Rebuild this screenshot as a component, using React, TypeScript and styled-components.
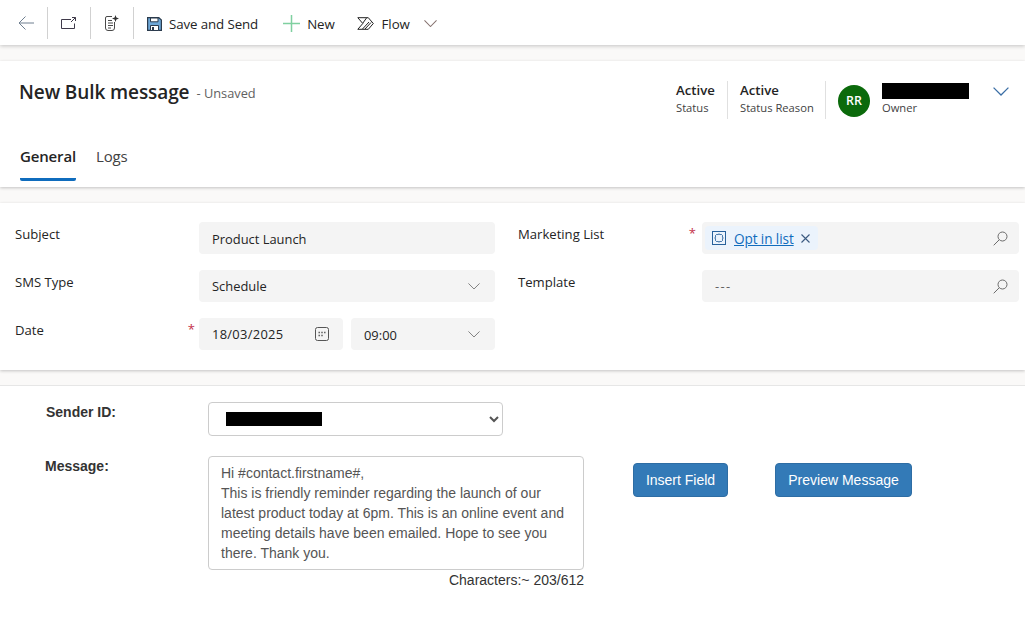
import React from "react";
import styled, { createGlobalStyle } from "styled-components";

const Global = createGlobalStyle`
  html, body { margin: 0; padding: 0; background: #faf9f8; }
  body { font-family: "Open Sans", "Noto Sans", sans-serif; color: #242424; overflow: hidden; }
  * { box-sizing: border-box; }
`;

const Page = styled.div`
  width: 1025px;
  height: 622px;
  display: flex;
  flex-direction: column;
  overflow: hidden;
`;

const Toolbar = styled.div`
  height: 45px;
  background: #fff;
  box-shadow: 0 1px 4px rgba(0, 0, 0, 0.22);
  display: flex;
  align-items: center;
  padding-left: 4px;
  flex: none;
  position: relative;
`;
const IconCell = styled.div`
  width: 43px;
  height: 32px;
  display: flex;
  align-items: center;
  justify-content: center;
  border-right: 1px solid #d1d1d1;
  &:first-child { width: 44px; }
`;
const ToolButton = styled.div<{ $gap?: number; $ml?: number }>`
  display: flex;
  align-items: center;
  gap: ${(p) => p.$gap ?? 8}px;
  margin-left: ${(p) => p.$ml ?? 0}px;
  font-size: 13.3px;
  letter-spacing: -0.1px;
  color: #242424;
  padding-top: 2px;
`;
const ToolLabel = styled.span`
  padding-top: 1px;
`;

const Card = styled.section<{ $h: number; $mt: number }>`
  height: ${(p) => p.$h}px;
  margin-top: ${(p) => p.$mt}px;
  background: #fff;
  box-shadow: 0 1px 3px rgba(0, 0, 0, 0.22);
  flex: none;
`;

const HeaderTop = styled.div`
  display: flex;
  justify-content: space-between;
  height: 65px;
  padding: 19px 16px 0 19px;
`;
const TitleRow = styled.div`
  display: flex;
  align-items: center;
  gap: 7px;
  height: 24px;
`;
const Title = styled.h1`
  margin: 0;
  font-size: 19px;
  line-height: 24px;
  font-weight: 600;
  letter-spacing: -0.1px;
  color: #242424;
`;
const Unsaved = styled.span`
  font-size: 12.8px;
  line-height: 24px;
  color: #616161;
  padding-top: 1px;
`;
const Meta = styled.div`
  display: flex;
  align-items: flex-start;
  margin-top: 1px;
`;
const MetaBlock = styled.div<{ $w: number }>`
  width: ${(p) => p.$w}px;
  height: 38px;
  border-right: 1px solid #e0e0e0;
  margin-right: 12px;
`;
const MetaValue = styled.div`
  font-size: 13.2px;
  line-height: 18px;
  font-weight: 600;
  color: #242424;
`;
const MetaLabel = styled.div`
  font-size: 11.2px;
  line-height: 18px;
  color: #424242;
`;
const OwnerBlock = styled.div`
  display: flex;
  align-items: center;
  gap: 12px;
  padding-top: 1px;
`;
const Avatar = styled.div`
  width: 32px;
  height: 32px;
  border-radius: 50%;
  background: #0b6a0b;
  color: #fff;
  font-size: 12.4px;
  font-weight: 600;
  display: flex;
  align-items: center;
  justify-content: center;
  margin-top: 2px;
`;
const OwnerText = styled.div`
  width: 99px;
  padding-top: 1px;
`;
const OwnerChevron = styled.span`
  display: flex;
  margin-bottom: 15px;
`;
const Redacted = styled.div<{ $w: number; $h: number }>`
  width: ${(p) => p.$w}px;
  height: ${(p) => p.$h}px;
  background: #000;
`;
const Tabs = styled.div`
  display: flex;
  gap: 20px;
  padding-left: 20px;
  height: 61px;
`;
const Tab = styled.div<{ $active?: boolean }>`
  height: 55px;
  padding-top: 19px;
  font-size: 15px;
  line-height: 22px;
  letter-spacing: -0.15px;
  font-weight: ${(p) => (p.$active ? 600 : 400)};
  color: ${(p) => (p.$active ? "#242424" : "#424242")};
  border-bottom: 3px solid ${(p) => (p.$active ? "#0f6cbd" : "transparent")};
  border-radius: 0 0 2px 2px;
`;

const FormGrid = styled.div`
  display: grid;
  grid-template-columns: 184px 296px 191px 16px 1fr;
  grid-template-rows: repeat(3, 32px);
  row-gap: 16px;
  padding: 19px 6px 0 15px;
`;
const Label = styled.div<{ $col?: number }>`
  font-size: 13.1px;
  line-height: 24px;
  color: #242424;
  ${(p) => (p.$col ? `grid-column: ${p.$col};` : "")}
  ${(p) => (p.$col === 3 ? "padding-left: 23px;" : "")}
`;
const LabelWrap = styled.div`
  position: relative;
`;
const Star = styled.span<{ $r: number }>`
  position: absolute;
  right: ${(p) => p.$r}px;
  top: 2px;
  color: #c4314b;
  font-size: 13px;
`;
const Field = styled.div<{ $muted?: boolean; $spaced?: boolean }>`
  height: 32px;
  background: #f4f4f4;
  border-radius: 4px;
  display: flex;
  align-items: center;
  justify-content: space-between;
  padding: 0 15px 0 13px;
  font-size: 12.9px;
  letter-spacing: ${(p) => (p.$spaced ? "0.3px" : "0")};
  color: ${(p) => (p.$muted ? "#616161" : "#242424")};
`;
const FieldText = styled.span<{ $low?: boolean }>`
  padding-top: ${(p) => (p.$low ? 2 : 0)}px;
`;
const Placeholder = styled.span`
  letter-spacing: 1.3px;
`;
const DateRow = styled.div`
  display: grid;
  grid-template-columns: 144px 144px;
  gap: 8px;
`;
const LookupField = styled(Field)`
  grid-column: 5;
  padding: 0 11px 0 3px;
`;
const PlainLookup = styled(Field)`
  grid-column: 5;
  padding-right: 11px;
`;
const CalendarField = styled(Field)`
  padding-right: 14px;
`;
const Chip = styled.div`
  height: 24px;
  background: #ebf3fc;
  border-radius: 4px;
  display: flex;
  align-items: center;
  gap: 7px;
  padding: 0 8px 0 7px;
`;
const ChipIconBox = styled.span`
  display: flex;
  margin-right: 1px;
`;
const ChipLink = styled.a`
  color: #0f6cbd;
  font-size: 13.6px;
  text-decoration: underline;
  letter-spacing: -0.1px;
`;

const Lower = styled.div`
  flex: 1;
  margin-top: 15px;
  background: #fff;
  border-top: 1px solid #e6e6e6;
  font-family: "Liberation Sans", Arial, sans-serif;
  font-size: 14px;
  color: #333;
  display: grid;
  grid-template-columns: 208px 376px 49px 95px 47px 137px;
  grid-template-rows: 34px auto auto;
  row-gap: 20px;
  align-content: start;
  padding-top: 16px;
`;
const LowerLabel = styled.label<{ $pl: number }>`
  font-weight: 700;
  padding-left: ${(p) => p.$pl}px;
  line-height: 18px;
  padding-top: 1px;
`;
const SelectWrap = styled.div`
  grid-column: 2 / span 5;
  position: relative;
  width: 295px;
`;
const NativeSelect = styled.select`
  width: 295px;
  height: 34px;
  border: 1px solid #ccc;
  border-radius: 4px;
  background: #fff;
  color: #555;
  font-family: inherit;
  font-size: 14px;
  padding: 6px 12px;
`;
const RedactOver = styled(Redacted)`
  position: absolute;
  left: 18px;
  top: 10px;
`;
const TextArea = styled.textarea`
  width: 376px;
  height: 114px;
  border: 1px solid #ccc;
  border-radius: 4px;
  padding: 6px 12px 0;
  font-family: inherit;
  font-size: 14px;
  line-height: 20px;
  color: #555;
  resize: none;
  overflow: hidden;
  display: block;
  outline: none;
`;
const Counter = styled.div`
  text-align: right;
  line-height: 20px;
  color: #333;
`;
const MessageCol = styled.div`
  grid-column: 2;
`;
const BlueButton = styled.button<{ $col: number }>`
  grid-column: ${(p) => p.$col};
  height: 34px;
  margin-top: 7px;
  background: #337ab7;
  border: 1px solid #2e6da4;
  border-radius: 4px;
  color: #fff;
  font-family: inherit;
  font-size: 14px;
  padding: 0;
`;

const BackIcon = () => (
  <svg width="16" height="14" viewBox="0 0 16 14" fill="none" stroke="#6f7f90" strokeWidth="1">
    <path d="M1 7h15M7.500.5 1 7l6.500 6.500" />
  </svg>
);
const OpenIcon = () => (
  <svg width="16" height="12" viewBox="0 0 16 12" fill="none" stroke="#3f3a4a" strokeWidth="1">
    <path d="M10 2.500H.5v9h13V6.500M11 .5h3.500V4M14.500.5 10 5" />
  </svg>
);
const NoteIcon = () => (
  <svg width="14" height="16" viewBox="0 0 14 16" fill="none" stroke="#4a4a4a" strokeWidth="1">
    <path d="M7 1.500H2a1.500 1.500 0 0 0-1.500 1.500v10A2.500 2.500 0 0 0 3 15.500h4A2.500 2.500 0 0 0 9.500 13V7" />
    <path d="M3 5.500h4M3 8h5M3 10.500h5M3 13h3" />
    <path d="M10.500 0l.9 2.600 2.600.9-2.600.9-.9 2.600-.9-2.600L7 3.500l2.600-.9z" fill="#333" stroke="none" />
  </svg>
);
const SaveIcon = () => (
  <svg width="15" height="14" viewBox="0 0 15 14" fill="none">
    <path d="M.6.6h11.200l2.600 2.400v10.400H.6z" fill="#6ea8d8" stroke="#2b3b4d" strokeWidth="1.200" />
    <path d="M3.500 1v3.800h7.500V1z" fill="#fff" stroke="#2b3b4d" />
    <path d="M3.500 13.500V8.500h8v5z" fill="#fff" stroke="#2b3b4d" />
    <rect x="5" y="10" width="2" height="3" fill="#2b3b4d" />
  </svg>
);
const PlusIcon = () => (
  <svg width="17" height="17" viewBox="0 0 17 17" stroke="#7fd0a0" strokeWidth="1.500">
    <path d="M8.500 0v17M0 8.500h17" />
  </svg>
);
const FlowIcon = () => (
  <svg width="17" height="13" viewBox="0 0 17 13" fill="none" stroke="#222" strokeWidth="1">
    <path d="M.8.7h10.500l5 5.800-5 5.800H.8l5-5.800z" />
    <path d="M5.500 12 12 5M8 12l6-6.500M5.700 6.300 9.500 1" />
  </svg>
);
const Chevron = ({ color = "#7a7a7a", w = 12 }: { color?: string; w?: number }) => (
  <svg width={w} height={(w * 8) / 14} viewBox="0 0 14 8" fill="none" stroke={color} strokeWidth="1.100">
    <path d="M.5.5 7 7l6.500-6.500" />
  </svg>
);
const SearchIcon = () => (
  <svg width="15" height="15" viewBox="0 0 15 15" fill="none" stroke="#6b6b6b" strokeWidth="1">
    <circle cx="9.500" cy="5.500" r="4.500" />
    <path d="M6.200 8.800.7 14.300" />
  </svg>
);
const CalendarIcon = () => (
  <svg width="14" height="14" viewBox="0 0 14 14" fill="none" stroke="#555" strokeWidth="1">
    <rect x=".5" y=".5" width="13" height="13" rx="2" />
    <path d="M3.500 5.500h1.400M6.300 5.500h1.400M9.100 5.500h1.400M3.500 8.500h1.400M6.300 8.500h1.400" strokeWidth="1.400" />
  </svg>
);
const EntityIcon = () => (
  <svg width="14" height="14" viewBox="0 0 14 14" fill="none" stroke="#27619b" strokeWidth="1">
    <rect x=".5" y=".5" width="13" height="13" />
    <path d="M4.500 3.500h1.300L7 3l1.200.5h1.300l1 1v1.300L11 7l-.5 1.200v1.300l-1 1H8.200L7 11l-1.200-.5H4.500l-1-1V8.200L3 7l.5-1.200V4.500z" />
  </svg>
);
const CloseIcon = () => (
  <svg width="9" height="9" viewBox="0 0 9 9" stroke="#3a5a80" strokeWidth="1.100">
    <path d="M.5.5l8 8M8.500.5l-8 8" />
  </svg>
);

const message =
  "Hi #contact.firstname#,\nThis is friendly reminder regarding the launch of our latest product today at 6pm. This is an online event and meeting details have been emailed. Hope to see you there. Thank you.";

export default function App() {
  return (
    <Page>
      <Global />
      <Toolbar>
        <IconCell><BackIcon /></IconCell>
        <IconCell><OpenIcon /></IconCell>
        <IconCell><NoteIcon /></IconCell>
        <ToolButton $ml={13} $gap={7}><SaveIcon /><ToolLabel>Save and Send</ToolLabel></ToolButton>
        <ToolButton $ml={25} $gap={7}><PlusIcon /><ToolLabel>New</ToolLabel></ToolButton>
        <ToolButton $ml={22}><FlowIcon /><ToolLabel>Flow</ToolLabel></ToolButton>
        <ToolButton $ml={14}><Chevron color="#85716e" w={13} /></ToolButton>
      </Toolbar>

      <Card $h={126} $mt={16}>
        <HeaderTop>
          <TitleRow>
            <Title>New Bulk message</Title>
            <Unsaved>- Unsaved</Unsaved>
          </TitleRow>
          <Meta>
            <MetaBlock $w={52}>
              <MetaValue>Active</MetaValue>
              <MetaLabel>Status</MetaLabel>
            </MetaBlock>
            <MetaBlock $w={86}>
              <MetaValue>Active</MetaValue>
              <MetaLabel>Status Reason</MetaLabel>
            </MetaBlock>
            <OwnerBlock>
              <Avatar>RR</Avatar>
              <OwnerText>
                <Redacted $w={87} $h={16} />
                <MetaLabel>Owner</MetaLabel>
              </OwnerText>
              <OwnerChevron><Chevron color="#3a6ea5" w={16} /></OwnerChevron>
            </OwnerBlock>
          </Meta>
        </HeaderTop>
        <Tabs>
          <Tab $active>General</Tab>
          <Tab>Logs</Tab>
        </Tabs>
      </Card>

      <Card $h={167} $mt={16}>
        <FormGrid>
          <Label>Subject</Label>
          <Field><FieldText $low>Product Launch</FieldText></Field>
          <Label $col={3}>Marketing List</Label>
          <LabelWrap><Star $r={6}>*</Star></LabelWrap>
          <LookupField>
            <Chip>
              <ChipIconBox><EntityIcon /></ChipIconBox>
              <ChipLink>Opt in list</ChipLink>
              <CloseIcon />
            </Chip>
            <SearchIcon />
          </LookupField>

          <Label>SMS Type</Label>
          <Field>Schedule<Chevron /></Field>
          <Label $col={3}>Template</Label>
          <PlainLookup $muted><Placeholder>---</Placeholder><SearchIcon /></PlainLookup>

          <LabelWrap>
            <Label>Date</Label>
            <Star $r={4}>*</Star>
          </LabelWrap>
          <DateRow>
            <CalendarField $spaced>18/03/2025<CalendarIcon /></CalendarField>
            <Field><FieldText $low>09:00</FieldText><Chevron /></Field>
          </DateRow>
        </FormGrid>
      </Card>

      <Lower>
        <LowerLabel $pl={46}>Sender ID:</LowerLabel>
        <SelectWrap>
          <NativeSelect defaultValue="">
            <option value=""></option>
          </NativeSelect>
          <RedactOver $w={96} $h={14} />
        </SelectWrap>
        <LowerLabel $pl={45}>Message:</LowerLabel>
        <MessageCol>
          <TextArea readOnly value={message} />
          <Counter>Characters:~ 203/612</Counter>
        </MessageCol>
        <BlueButton $col={4}>Insert Field</BlueButton>
        <BlueButton $col={6}>Preview Message</BlueButton>
      </Lower>
    </Page>
  );
}
